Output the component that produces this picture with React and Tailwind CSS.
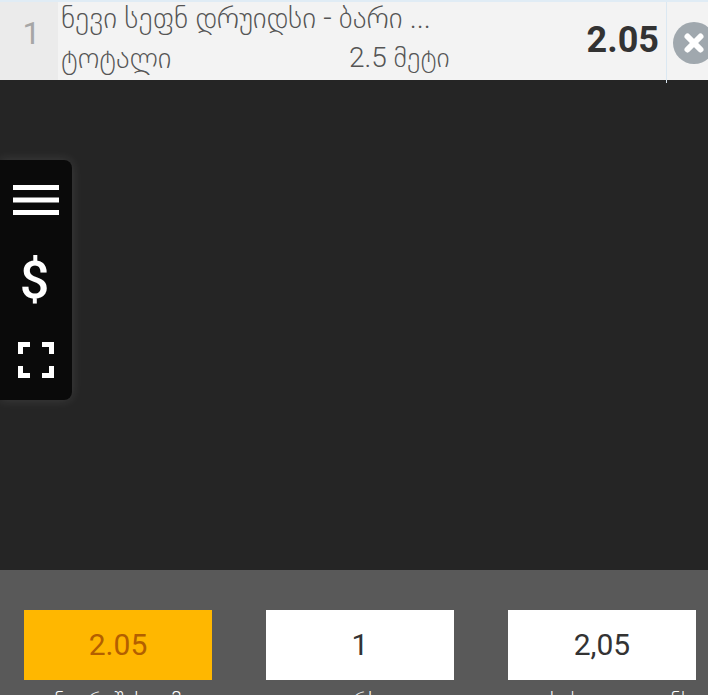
import { X } from "lucide-react";

function Field({ value, label, active, className }) {
  return (
    <div className={`flex w-[188px] shrink-0 flex-col items-center ${className}`}>
      <div
        className={`flex h-[70px] w-full shrink-0 items-center justify-center pb-[2px] text-[30px] ${
          active ? "bg-[#ffb700] text-[#b35f00]" : "bg-white text-[#333333]"
        }`}
      >
        {value}
      </div>
      <div className="mt-[9px] text-[22px] leading-[24px] font-light whitespace-nowrap text-white">{label}</div>
    </div>
  );
}

export default function App() {
  return (
    <div className="relative flex h-[695px] w-[708px] flex-col overflow-hidden bg-[#252525] font-['Roboto','Noto_Sans','DejaVu_Sans',sans-serif]">
      {/* Order row */}
      <div className="flex h-[80px] shrink-0 border-t-2 border-[#e0ecf5] bg-[#f3f3f3]">
        <div className="flex w-[58px] shrink-0 items-center justify-center bg-[#ebebeb] pb-[16px] pl-[5px] text-[32px] text-[#a6a6a6]">
          1
        </div>
        <div className="flex min-w-0 flex-1 flex-col pl-[3px] font-light text-[#555555]">
          <div className="h-[38px] text-[29.500px] leading-[32px] whitespace-nowrap">
            ნევი სეფნ დრუიდსი - ბარი ...
          </div>
          <div className="flex text-[29px] leading-[36px]">
            <span className="w-[288px]">ტოტალი</span>
            <span className="text-[28px]">2.5 მეტი</span>
          </div>
        </div>
        <div className="flex w-[100px] shrink-0 items-center justify-end pr-[7px] pb-[3px] text-[36px] font-bold text-[#333333]">
          2.05
        </div>
        <div className="flex h-[81px] w-[42px] shrink-0 items-center border-l border-[#dbe8f2] pl-[6px]">
          <div className="flex h-[42px] w-[42px] shrink-0 items-center justify-center rounded-full bg-[#a0a8ae]">
            <X size={26} strokeWidth={5.5} className="text-white" />
          </div>
        </div>
      </div>

      <div className="flex-1" />

      {/* Amount fields */}
      <div className="flex h-[125px] shrink-0 bg-[#595959] pt-[40px] pl-[24px]">
        <Field value="2.05" label="ანგარიშის ჯამი" active />
        <Field value="1" label="კურსი" className="ml-[54px]" />
        <Field value="2,05" label="გადასახდელი თანხა" className="ml-[54px]" />
      </div>

      {/* Side toolbar */}
      <div className="absolute top-[160px] left-0 flex h-[240px] w-[72px] flex-col items-center rounded-r-lg bg-[#0a0a0a] shadow-[0_0_12px_rgba(255,255,255,0.12)]">
        <svg width="46" height="30" viewBox="0 0 46 30" className="mt-[25px]" fill="#fff">
          <rect x="0" y="0" width="46" height="5" />
          <rect x="0" y="12.500" width="46" height="5" />
          <rect x="0" y="25" width="46" height="5" />
        </svg>
        <div className="mt-[41px] pr-[3px] text-[52px] leading-[50px] font-medium text-white">$</div>
        <svg width="36" height="36" viewBox="0 0 36 36" className="mt-[36px]" fill="#fff">
          <path d="M0 0h12v5H5v7H0zM24 0h12v12h-5V5h-7zM0 24h5v7h7v5H0zM31 24h5v12H24v-5h7z" />
        </svg>
      </div>
    </div>
  );
}
